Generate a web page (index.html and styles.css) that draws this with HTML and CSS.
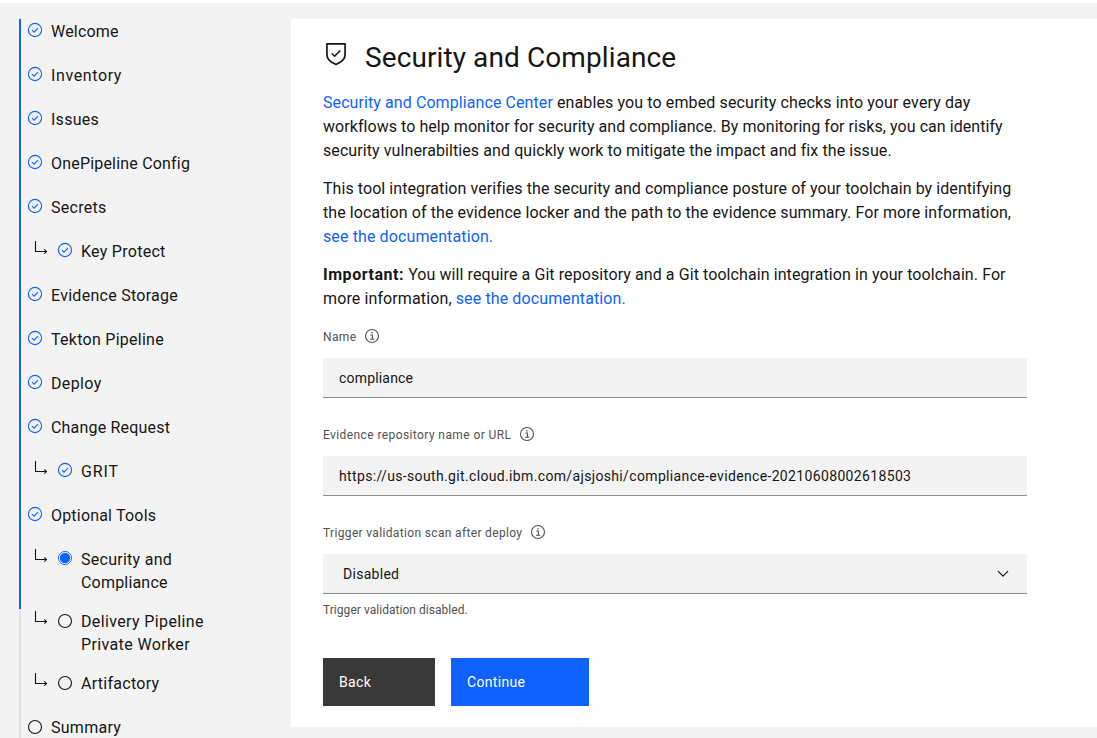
FILE: index.html
```
<!DOCTYPE html>
<html lang="en">
<head>
<meta charset="utf-8">
<title>Security and Compliance</title>
<link rel="stylesheet" href="styles.css">
</head>
<body>
<svg class="defs" aria-hidden="true">
  <symbol id="done" viewBox="0 0 16 16"><circle cx="8" cy="8" r="6.6" fill="none" stroke="currentColor" stroke-width="1.1"/><path d="M5 8.2 7 10.2 11 6.2" fill="none" stroke="currentColor" stroke-width="1.1"/></symbol>
  <symbol id="current" viewBox="0 0 16 16"><circle cx="8" cy="8" r="6.6" fill="none" stroke="currentColor" stroke-width=".9"/><circle cx="8" cy="8" r="5.2" fill="currentColor"/></symbol>
  <symbol id="todo" viewBox="0 0 16 16"><circle cx="8" cy="8" r="6.5" fill="none" stroke="currentColor" stroke-width="1.1"/></symbol>
  <symbol id="branch" viewBox="0 0 14 14"><path d="M1.5 0V10.5H12.5M10.3 8.3 12.5 10.5 10.3 12.7" fill="none" stroke="currentColor" stroke-width="1.1"/></symbol>
  <symbol id="info" viewBox="0 0 16 16"><circle cx="8" cy="8" r="6.5" fill="none" stroke="currentColor" stroke-width="1.1"/><path d="M6.3 7H8.4V11.2M6 11.3H10.4" fill="none" stroke="currentColor" stroke-width="1.1"/><circle cx="8" cy="4.8" r=".8" fill="currentColor"/></symbol>
</svg>
<div class="page">
  <nav class="steps">
    <div class="track"><div class="progress"></div></div>
    <ul class="step-list">
      <li class="step done"><svg class="mark"><use href="#done"/></svg><span class="t-welcome">Welcome</span></li>
      <li class="step done"><svg class="mark"><use href="#done"/></svg><span class="t-wide">Inventory</span></li>
      <li class="step done"><svg class="mark"><use href="#done"/></svg><span>Issues</span></li>
      <li class="step done"><svg class="mark"><use href="#done"/></svg><span class="t-welcome">OnePipeline Config</span></li>
      <li class="step done"><svg class="mark"><use href="#done"/></svg><span>Secrets</span></li>
      <li class="step sub done"><svg class="branch"><use href="#branch"/></svg><svg class="mark"><use href="#done"/></svg><span>Key Protect</span></li>
      <li class="step done"><svg class="mark"><use href="#done"/></svg><span>Evidence Storage</span></li>
      <li class="step done"><svg class="mark"><use href="#done"/></svg><span>Tekton Pipeline</span></li>
      <li class="step done"><svg class="mark"><use href="#done"/></svg><span class="t-mid">Deploy</span></li>
      <li class="step done"><svg class="mark"><use href="#done"/></svg><span class="t-welcome">Change Request</span></li>
      <li class="step sub done"><svg class="branch"><use href="#branch"/></svg><svg class="mark"><use href="#done"/></svg><span class="t-wider">GRIT</span></li>
      <li class="step done"><svg class="mark"><use href="#done"/></svg><span class="t-welcome">Optional Tools</span></li>
      <li class="step sub done"><svg class="branch"><use href="#branch"/></svg><svg class="mark"><use href="#current"/></svg><span>Security and<br><span class="t-welcome">Compliance</span></span></li>
      <li class="step sub todo"><svg class="branch"><use href="#branch"/></svg><svg class="mark"><use href="#todo"/></svg><span class="t-mid">Delivery Pipeline<br>Private Worker</span></li>
      <li class="step sub todo"><svg class="branch"><use href="#branch"/></svg><svg class="mark"><use href="#todo"/></svg><span>Artifactory</span></li>
      <li class="step todo"><svg class="mark"><use href="#todo"/></svg><span>Summary</span></li>
    </ul>
  </nav>
  <main class="card">
    <header class="title">
      <svg class="shield" viewBox="0 0 22 24"><path d="M1.9 1.9H20.1V11.8C20.1 15.5 18.6 18.3 15.6 19.9L11 22.4 6.4 19.9C3.4 18.3 1.9 15.5 1.9 11.8Z" fill="none" stroke="currentColor" stroke-width="1.7" stroke-linejoin="round"/><path d="M6.7 11.3 9.6 14.2 15.3 8.5" fill="none" stroke="currentColor" stroke-width="1.6"/></svg>
      <h1>Security and Compliance</h1>
    </header>
    <p><a>Security and Compliance Center</a> <span class="loose">enables you to embed security checks into your every day</span><br><span class="snug">workflows to help monitor for security and compliance. By monitoring for risks, you can identify</span><br>security vulnerabilties and quickly work to mitigate the impact and fix the issue.</p>
    <p><span class="close">This tool integration verifies the security and compliance posture of your toolchain by identifying</span><br>the location of the evidence locker and the path to the evidence summary. For more information,<br><a class="loose">see the documentation.</a></p>
    <p><strong>Important:</strong> You will require a Git repository and a Git toolchain integration in your toolchain. For<br><span class="loose">more information, <a>see the documentation.</a></span></p>
    <div class="field">
      <label class="label">Name<svg class="info"><use href="#info"/></svg></label>
      <div class="input t-name">compliance</div>
    </div>
    <div class="field">
      <label class="label label-long">Evidence repository name or URL<svg class="info"><use href="#info"/></svg></label>
      <div class="input">https://us-south.git.cloud.ibm.com/ajsjoshi/compliance-evidence-20210608002618503</div>
    </div>
    <div class="field">
      <label class="label">Trigger validation scan after deploy<svg class="info"><use href="#info"/></svg></label>
      <div class="input select">Disabled<svg class="chevron" viewBox="0 0 12 8"><path d="M1 1.2 6 6.2 11 1.2" fill="none" stroke="currentColor" stroke-width="1.2"/></svg></div>
      <div class="helper">Trigger validation disabled.</div>
    </div>
    <div class="actions">
      <button class="btn back">Back</button>
      <button class="btn next">Continue</button>
    </div>
  </main>
</div>
</body>
</html>
```
FILE: styles.css
```
* { box-sizing: border-box; }
html, body { height: 738px; overflow: hidden; }
body { margin: 0; padding-top: 3px; background: #fff; color: #161616; font-family: Roboto, "Noto Sans", sans-serif; font-size: 16px; }
.defs { display: none; }
.page { display: flex; height: 735px; padding: 16px 0 0 19px; background: #f3f3f3; overflow: hidden; }
.steps { display: flex; flex: 0 0 272px; height: 719px; overflow: hidden; }
.track { flex: 0 0 2px; background: #e0e0e0; }
.progress { height: 590px; background: #0f62fe; }
.step-list { list-style: none; margin: 0; padding: 1px 0 0 6px; }
.step { display: flex; flex: none; min-height: 44px; padding-bottom: 16px; line-height: 23px; letter-spacing: .27px; white-space: nowrap; }
.sub { padding-left: 7px; }
.mark { flex: none; width: 16px; height: 16px; margin: 2px 8px 0 0; color: #161616; }
.done .mark { color: #0f62fe; }
.todo .mark { margin-top: 3px; }
.branch { flex: none; width: 14px; height: 14px; margin: 1px 9px 0 0; }
.t-welcome { letter-spacing: .19px; }
.t-mid { letter-spacing: .37px; }
.t-wide { letter-spacing: .61px; }
.t-wider { letter-spacing: .85px; }
.card { flex: 1; height: 708px; padding: 19px 70px 0 32px; background: #fff; }
.title { display: flex; height: 40px; margin-bottom: 13px; }
.shield { width: 22px; height: 24px; margin: 3.5px 18px 0 2px; }
h1 { margin: 0; font-size: 28px; font-weight: 400; line-height: 40px; letter-spacing: .1px; }
p { margin: 0 0 14px; line-height: 24px; letter-spacing: .085px; white-space: nowrap; }
.snug { letter-spacing: .055px; }
.close { letter-spacing: .07px; }
.loose { letter-spacing: .115px; }
a { color: #0f62fe; }
strong { letter-spacing: .54px; }
.label { display: flex; align-items: center; height: 16px; margin-bottom: 13px; font-size: 12px; line-height: 16px; letter-spacing: .34px; color: #525252; }
.label-long { letter-spacing: .405px; }
.info { width: 16px; height: 16px; margin: -2px 0 0 8px; }
.field { height: 98px; padding-top: 4px; }
.input { display: flex; align-items: center; height: 40px; padding: 0 16px; background: #f3f3f3; border-bottom: 1px solid #8d8d8d; font-size: 14px; letter-spacing: .349px; color: #161616; }
.t-name { letter-spacing: .18px; }
.select { padding: 0 18px 0 20px; letter-spacing: .28px; }
.chevron { width: 12px; height: 8px; margin-left: auto; }
.helper { margin-top: 8px; font-size: 12px; line-height: 16px; letter-spacing: .04px; color: #525252; }
.actions { display: flex; gap: 16px; margin-top: 39px; }
.btn { height: 48px; padding: 0 16px; border: 0; color: #fff; font: 14px/18px Roboto, sans-serif; letter-spacing: .33px; text-align: left; }
.back { width: 112px; background: #393939; }
.next { width: 138px; background: #0f62fe; }
```
